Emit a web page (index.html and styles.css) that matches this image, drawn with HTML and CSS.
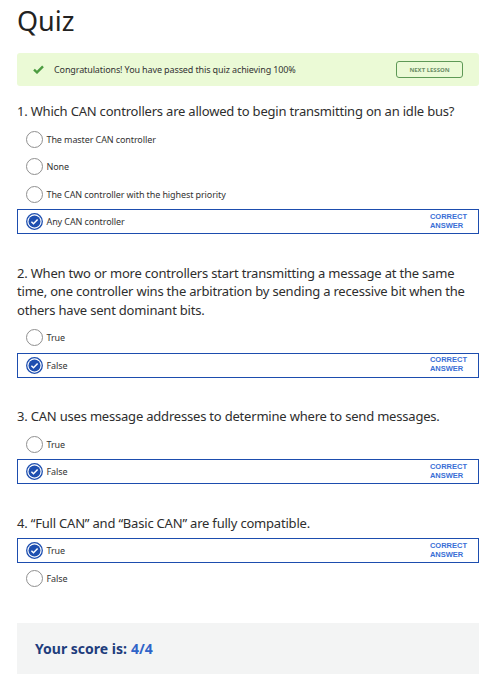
FILE: index.html
```html
<!DOCTYPE html>
<html lang="en">
<head>
<meta charset="utf-8">
<title>Quiz</title>
<link rel="stylesheet" href="styles.css">
</head>
<body>
<div class="page">
  <h1 class="title">Quiz</h1>

  <div class="banner">
    <svg class="banner-check" width="11" height="9" viewBox="0 0 11 9"><path d="M1 4.6 L4 7.4 L10 1.4" fill="none" stroke="#4c9c41" stroke-width="2.4"/></svg>
    <span class="banner-text">Congratulations! You have passed this quiz achieving 100%</span>
    <span class="next-btn">NEXT LESSON</span>
  </div>

  <div class="question">
    <div class="q-title">1. Which CAN controllers are allowed to begin transmitting on an idle bus?</div>
    <div class="options">
      <div class="opt"><span class="radio"></span><span class="opt-text">The master CAN controller</span></div>
      <div class="opt"><span class="radio"></span><span class="opt-text">None</span></div>
      <div class="opt"><span class="radio"></span><span class="opt-text">The CAN controller with the highest priority</span></div>
      <div class="opt selected">
        <svg class="radio-on" width="17" height="17" viewBox="0 0 17 17"><circle cx="8.5" cy="8.5" r="7.8" fill="none" stroke="#1e4fb0" stroke-width="1.3"/><circle cx="8.5" cy="8.5" r="6" fill="#1e4fb0"/><path d="M5.4 8.7 L7.5 10.7 L11.6 6.5" fill="none" stroke="#fff" stroke-width="1.5"/></svg>
        <span class="opt-text">Any CAN controller</span>
        <span class="correct">CORRECT<br>ANSWER</span>
      </div>
    </div>
  </div>

  <div class="question">
    <div class="q-title">2. When two or more controllers start transmitting a message at the same time, one controller wins the arbitration by sending a recessive bit when the others have sent dominant bits.</div>
    <div class="options">
      <div class="opt"><span class="radio"></span><span class="opt-text">True</span></div>
      <div class="opt selected">
        <svg class="radio-on" width="17" height="17" viewBox="0 0 17 17"><circle cx="8.5" cy="8.5" r="7.8" fill="none" stroke="#1e4fb0" stroke-width="1.3"/><circle cx="8.5" cy="8.5" r="6" fill="#1e4fb0"/><path d="M5.4 8.7 L7.5 10.7 L11.6 6.5" fill="none" stroke="#fff" stroke-width="1.5"/></svg>
        <span class="opt-text">False</span>
        <span class="correct">CORRECT<br>ANSWER</span>
      </div>
    </div>
  </div>

  <div class="question">
    <div class="q-title">3. CAN uses message addresses to determine where to send messages.</div>
    <div class="options">
      <div class="opt"><span class="radio"></span><span class="opt-text">True</span></div>
      <div class="opt selected">
        <svg class="radio-on" width="17" height="17" viewBox="0 0 17 17"><circle cx="8.5" cy="8.5" r="7.8" fill="none" stroke="#1e4fb0" stroke-width="1.3"/><circle cx="8.5" cy="8.5" r="6" fill="#1e4fb0"/><path d="M5.4 8.7 L7.5 10.7 L11.6 6.5" fill="none" stroke="#fff" stroke-width="1.5"/></svg>
        <span class="opt-text">False</span>
        <span class="correct">CORRECT<br>ANSWER</span>
      </div>
    </div>
  </div>

  <div class="question">
    <div class="q-title">4. “Full CAN” and “Basic CAN” are fully compatible.</div>
    <div class="options">
      <div class="opt selected">
        <svg class="radio-on" width="17" height="17" viewBox="0 0 17 17"><circle cx="8.5" cy="8.5" r="7.8" fill="none" stroke="#1e4fb0" stroke-width="1.3"/><circle cx="8.5" cy="8.5" r="6" fill="#1e4fb0"/><path d="M5.4 8.7 L7.5 10.7 L11.6 6.5" fill="none" stroke="#fff" stroke-width="1.5"/></svg>
        <span class="opt-text">True</span>
        <span class="correct">CORRECT<br>ANSWER</span>
      </div>
      <div class="opt"><span class="radio"></span><span class="opt-text">False</span></div>
    </div>
  </div>

  <div class="score">Your score is: <span class="score-num">4/4</span></div>
</div>
</body>
</html>
```

FILE: styles.css
```css
* { box-sizing: border-box; }
html, body { margin: 0; padding: 0; background: #fff; }
body { font-family: "Noto Sans", "Open Sans", sans-serif; color: #333; }

.page { width: 462px; margin-left: 17px; }

.title {
  font-size: 27px;
  font-weight: 400;
  line-height: 34px;
  margin: 4px 0 15px;
  color: #222;
}

.banner {
  height: 33px;
  background: #ebfad6;
  border-radius: 3px;
  display: flex;
  align-items: center;
  padding: 0 16px;
}
.banner-check { flex: none; margin-right: 10px; }
.banner-text { font-size: 9px; color: #333; letter-spacing: -0.12px; }
.next-btn {
  margin-left: auto;
  width: 67px;
  height: 17px;
  border: 1px solid #5e9956;
  border-radius: 3px;
  display: flex;
  align-items: center;
  justify-content: center;
  font-size: 6px;
  font-weight: 700;
  color: #6d8f68;
}

.question { margin-top: 16px; margin-bottom: 29.5px; }
.question + .question { margin-top: 0; }

.q-title {
  font-size: 13px;
  line-height: 18.5px;
  letter-spacing: -0.2px;
  color: #2e2e2e;
  margin-bottom: 6px;
}

.options { display: flex; flex-direction: column; gap: 2.5px; }
.opt {
  height: 25px;
  border: 1.5px solid transparent;
  display: flex;
  align-items: center;
  padding: 0 11px 0 7.5px;
}
.opt.selected { border-color: #1d4dae; }
.radio {
  width: 17px;
  height: 17px;
  border: 1px solid #8f8f8f;
  border-radius: 50%;
  flex: none;
}
.radio-on { flex: none; }
.opt-text { font-size: 9px; margin-left: 4px; color: #333; letter-spacing: -0.1px; }
.correct {
  margin-left: auto;
  font-family: "Liberation Sans", Arial, sans-serif;
  font-size: 7.5px;
  line-height: 8.8px;
  font-weight: 700;
  color: #3a6fd6;
}

.score {
  margin-top: 32px;
  height: 51px;
  background: #f3f4f4;
  padding-left: 18px;
  display: flex;
  align-items: center;
  font-size: 14px;
  font-weight: 700;
  color: #1e3d7c;
}
.score-num { color: #2f64c8; margin-left: 4px; }
```
